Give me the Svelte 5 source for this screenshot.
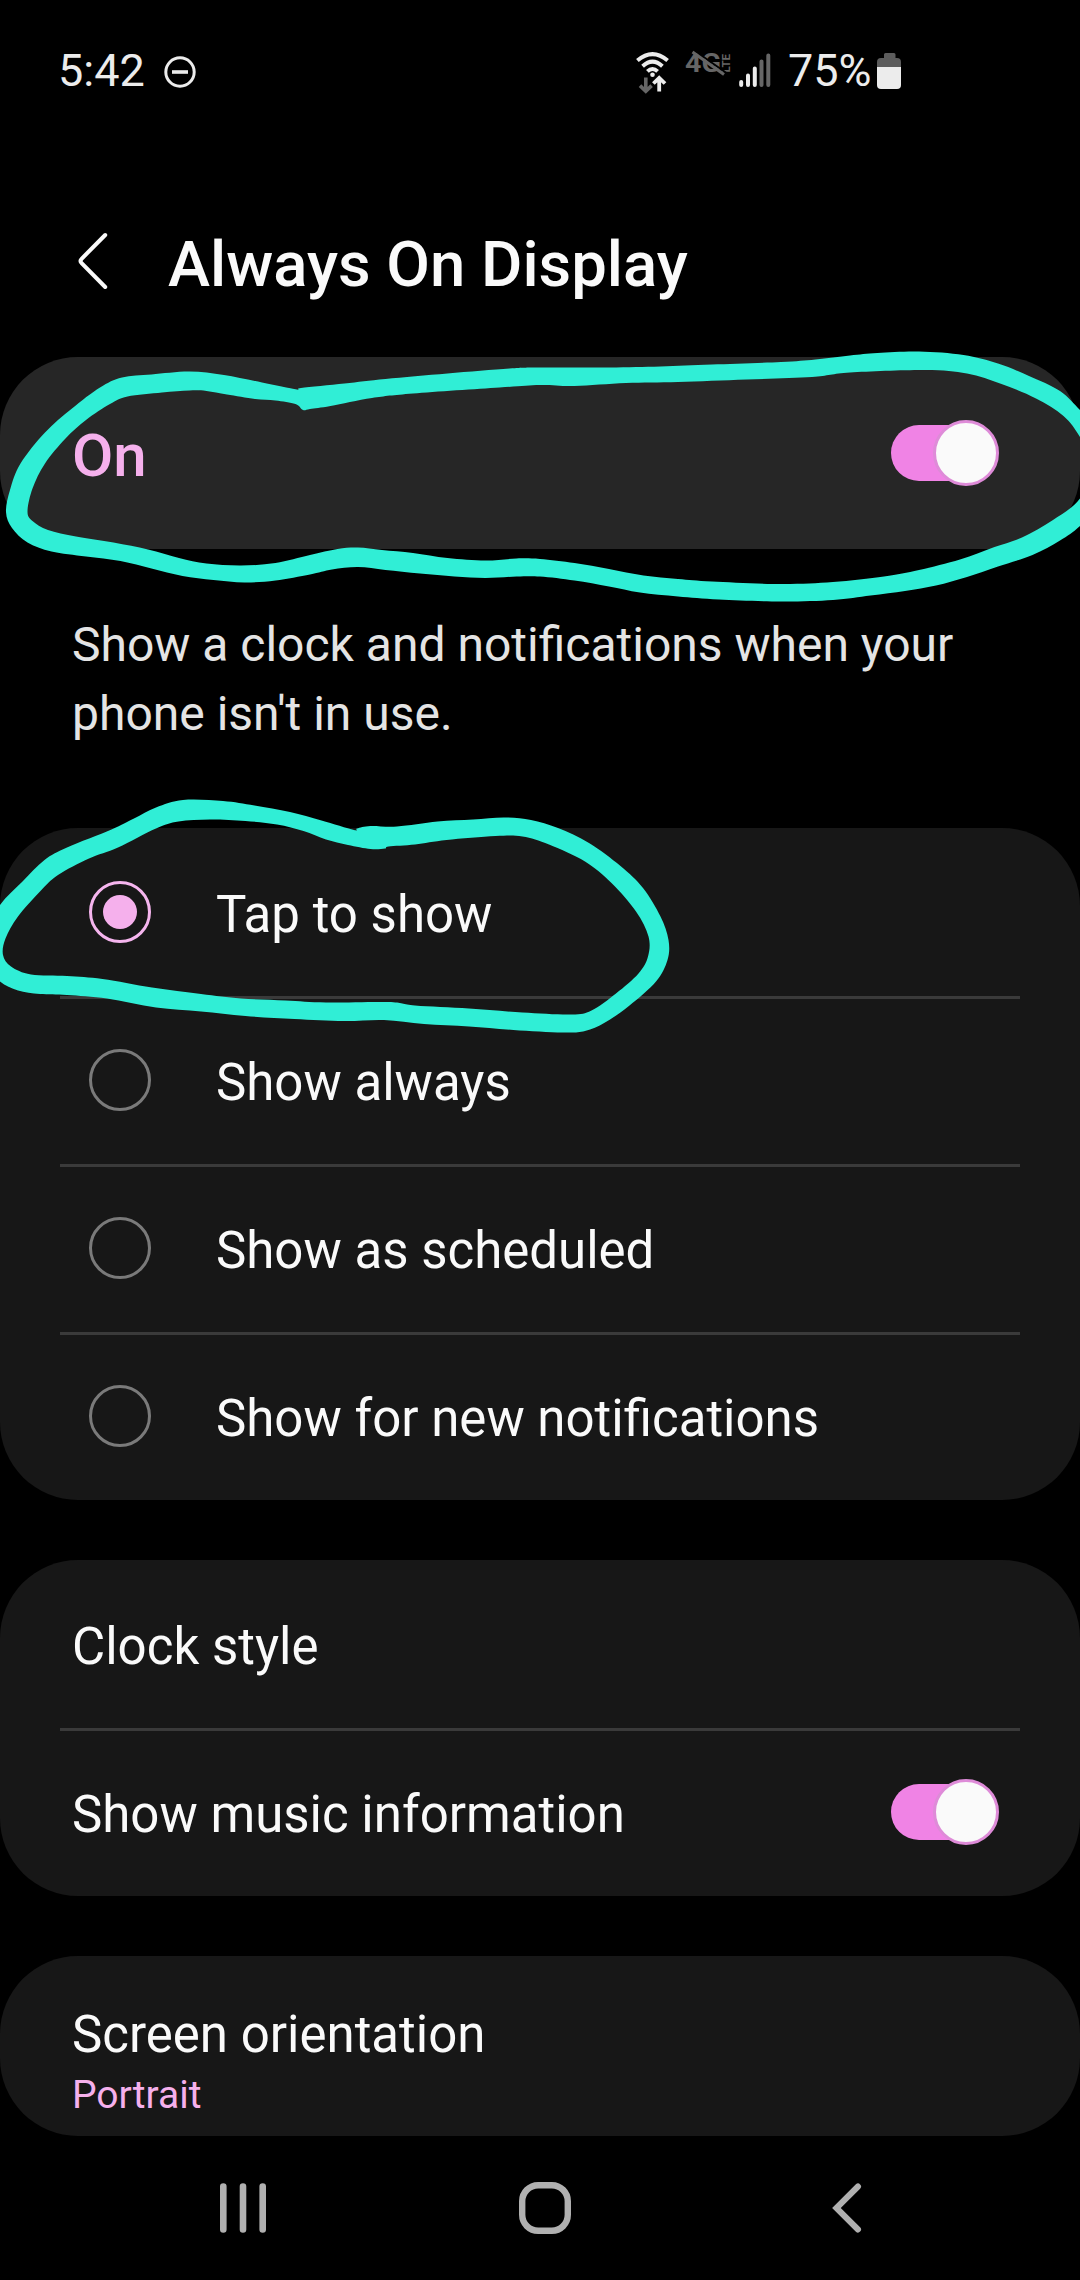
<script>
  const options = ['Tap to show', 'Show always', 'Show as scheduled', 'Show for new notifications'];
  let selected = $state('Tap to show');

  // Hand-drawn marker loops: each has an outer and an inner edge.
  const loops = [
    {
      outer: [297,389.5,262,382.5,224,375,189.5,371.5,151.5,374.5,122,377.5,100,387.5,72,408.5,45,432.5,20.5,463.5,10,490,6,512,12,528,27.5,542.5,51.5,551.5,86,556.5,120.5,561,151.5,568.5,182.5,576,213.5,580,244.5,582.5,275.5,580.5,310,574.5,332,569.5,358,567,385.5,570,420,573.5,454.5,576.5,485.5,578,516.5,576.5,540,576.5,574.5,580.5,609,586.5,640,592.5,678,596.5,719,599.5,781,601.5,833,600,870.5,595.5,905,591,936,585.5,967,577,998,566.5,1032.5,555,1060,540.5,1080,526,1104,500,1110,460,1096,426,1080,410,1060,391,1029,376,998,363.5,963.5,355,919,351.5,877.5,353,850,355.5,815.5,359.5,781,362,712,364.5,660.5,366.5,609,367.5,540,367.5,509.5,368.5,447.5,373.5,385.5,379,344.5,383.5,301,388],
      inner: [303,410,295.5,404,275.5,400.5,255,399,227,394.5,206.5,391,189.5,390.5,162,392.5,127.5,396.5,110,404,86,420,65.5,438.5,45,463.5,32.5,488.5,27.5,511.5,32.5,521,48,530,76,536.5,113.5,542.5,148,549.5,179,558,206.5,563.5,241,565.5,275.5,563,310,555,337.5,549,358,547.5,382,550,413,553,447.5,558,485.5,560.5,516.5,558.5,540,559,574.5,563,609,569,643.5,575.5,678,579,712,581.5,781,584,833,582,884,576.5,919,570,960,559.5,994.5,547,1022,537.5,1053,520,1080,498.5,1094,465,1080,437,1063.5,416,1036,398.5,1001.5,384,967,373.5,925.5,370,850,372.5,812,377,746.5,379.5,678,382,626,383,574.5,386,540,385,499.5,387.5,413,393.5,372,398,330.5,406,310,409]
    },
    {
      outer: [354,830,321.5,820.5,290,812,254.5,805.5,223,801,183,800,156,807.5,134,818.5,111.5,829.5,67,847.5,44.5,860,22.5,881.5,0,905,-16,935,-14,965,0,981.5,18,990.5,40,994,67,995,107,998.5,156,1007.5,201,1011.5,245.5,1016,294.5,1019,344,1021,384,1020,424,1024,469,1026.5,513.5,1030,562.5,1032.5,585,1031,605,1022.5,629.5,1005.5,656,981.5,667.5,960,668.5,940,660.5,916.5,643,888,620.5,866,589,843,558,828,531,820,504.5,817.5,473,819.5,437.5,821.5,397,826.5,370.5,826,357,828.5],
      inner: [385,848.5,370.5,849,348,845,326,839.5,303.5,831,277,824.5,245.5,821,210,819.5,178.5,821.5,156,828.5,118,847.5,89,858.5,58,875,40,891.5,18,916.5,5.5,938.5,3,955,11,966.5,31,974.5,67,976,102.5,979,152,987.5,201,994,241,998.5,285.5,1000.5,326,1002.5,388.5,1002,415,1005.5,469,1008.5,522.5,1012.5,571.5,1014.5,591.5,1010.5,616,993.5,638.5,973.5,648,956.5,648.5,936.5,636,911.5,611.5,883,585,861.5,549,844.5,522.5,836.5,495.5,836,446.5,840,415,844.5,388.5,846.5]
    }
  ];

  // Closed Catmull-Rom spline through a flat list of x, y pairs.
  function smooth(flat) {
    const n = flat.length / 2;
    const p = (i) => {
      const k = ((i % n) + n) % n;
      return [flat[2 * k], flat[2 * k + 1]];
    };
    let d = `M${p(0).join(' ')}`;
    for (let i = 0; i < n; i++) {
      const [a, b, c, e] = [p(i - 1), p(i), p(i + 1), p(i + 2)];
      const c1 = [b[0] + (c[0] - a[0]) / 6, b[1] + (c[1] - a[1]) / 6];
      const c2 = [c[0] - (e[0] - b[0]) / 6, c[1] - (e[1] - b[1]) / 6];
      d += `C${c1.join(' ')} ${c2.join(' ')} ${c.join(' ')}`;
    }
    return d + 'Z';
  }
</script>

{#snippet toggle()}
  <span class="toggle"><span class="track"></span><span class="thumb"></span></span>
{/snippet}

<div class="screen">
  <div class="status">
    <span class="time">5:42</span>
    <svg class="dnd" width="32" height="32" viewBox="0 0 32 32" fill="none" stroke="#ececec" stroke-width="3">
      <circle cx="16" cy="16" r="14.2" /><path d="M8 16H24" stroke-width="3.6" />
    </svg>
    <svg class="wifi" width="34" height="44" viewBox="0 0 34 44" fill="none">
      <g stroke="#ececec" stroke-width="4">
        <path d="M2.4 9.6Q17.5 -3.4 32.6 9.6" />
        <path d="M7.6 15.2Q17.5 6.2 27.4 15.2" />
        <path d="M12.4 20.4Q17.5 15.6 22.6 20.4" />
      </g>
      <circle cx="17.5" cy="23.8" r="2.3" fill="#ececec" />
      <path d="M10.8 26.5V40M5 34.6L10.8 40.3L16.6 34.6" stroke="#666" stroke-width="3.6" />
      <path d="M24.2 40.5V27M18.4 32.5L24.2 26.8L30 32.5" stroke="#ececec" stroke-width="3.8" />
    </svg>
    <svg class="lte" width="50" height="34" viewBox="0 -4 50 34">
      <text class="gen" x="0" y="21" textLength="36" lengthAdjust="spacingAndGlyphs">4G</text>
      <text class="net" transform="translate(45 21.5) rotate(-90)" textLength="18.5" lengthAdjust="spacingAndGlyphs">LTE</text>
      <path d="M10 0L41.5 22" stroke="#000" stroke-width="2" />
      <path d="M7.5 1L39 23.5" stroke="#666" stroke-width="3" />
    </svg>
    <svg class="signal" width="32" height="36" viewBox="0 0 32 36" stroke-width="4" stroke-linecap="round">
      <path d="M2.2 29V32M9 22.5V32M15.8 15.5V32" stroke="#ececec" />
      <path d="M22.5 8.5V32M29.3 2.5V32" stroke="#666" />
    </svg>
    <span class="percent">75%</span>
    <svg class="battery" width="24" height="36" viewBox="0 0 24 36">
      <path d="M7 5V1.5Q7 0 8.5 0H17Q18.5 0 18.5 1.5V5H20Q24 5 24 9V14H0V9Q0 5 4 5Z" fill="#5c5c5c" />
      <path d="M0 14H24V32Q24 36 20 36H4Q0 36 0 32Z" fill="#ececec" />
    </svg>
  </div>

  <header>
    <svg width="30" height="58" viewBox="0 0 30 58" fill="none" stroke="#fafafa" stroke-width="4" stroke-linecap="round" stroke-linejoin="round">
      <path d="M27.2 3L3.6 26.8Q1.5 29 3.6 31.2L27.2 55" />
    </svg>
    <h1>Always On Display</h1>
  </header>

  <section class="card master">
    <span class="on">On</span>
    {@render toggle()}
  </section>

  <p class="about">Show a clock and notifications when your phone isn't in use.</p>

  <section class="card options">
    {#each options as option}
      <button class="row option" onclick={() => (selected = option)}>
        <span class="radio" class:checked={selected === option}></span>
        <span class="label">{option}</span>
      </button>
    {/each}
  </section>

  <section class="card clock">
    <div class="row"><span class="label">Clock style</span></div>
    <div class="row"><span class="label">Show music information</span>{@render toggle()}</div>
  </section>

  <section class="card orientation">
    <span class="label">Screen orientation</span>
    <span class="value">Portrait</span>
  </section>

  <nav>
    <svg width="48" height="54" viewBox="0 0 48 54" stroke="#b0b0b0" stroke-width="6.6" stroke-linecap="round">
      <path d="M4.3 5.5V48.5M24 5.5V48.5M43.7 5.5V48.5" />
    </svg>
    <svg class="home" width="54" height="54" viewBox="0 0 54 54" fill="none" stroke="#b0b0b0" stroke-width="6.4">
      <rect x="4.2" y="4.2" width="45.6" height="45.6" rx="16" />
    </svg>
    <svg width="30" height="54" viewBox="0 0 30 54" fill="none" stroke="#b0b0b0" stroke-width="6" stroke-linecap="round">
      <path d="M26 5.5L4.4 27L26 48.5" />
    </svg>
  </nav>

  <svg class="marker" width="1080" height="2280" viewBox="0 0 1080 2280">
    {#each loops as loop}
      <path d={smooth(loop.outer) + smooth(loop.inner)} fill="#30eed6" fill-rule="evenodd" />
    {/each}
  </svg>
</div>

<style>
  :global(body) {
    background: #000;
  }
  .screen {
    position: relative;
    display: flex;
    flex-direction: column;
    width: 1080px;
    height: 2280px;
    overflow: hidden;
    background: #000;
    color: #fafafa;
    font-family: Roboto, sans-serif;
  }
  svg {
    display: block;
    flex: none;
  }
  .status {
    display: flex;
    align-items: flex-start;
    height: 181px;
    padding: 51px 0 0 58px;
    box-sizing: border-box;
    color: #ececec;
    font-size: 45px;
    line-height: 40px;
  }
  .time {
    width: 106px;
  }
  .dnd {
    margin-top: 5px;
  }
  .wifi {
    margin-left: 439px;
  }
  .lte {
    margin: -4px 0 0 16px;
  }
  .gen,
  .net {
    fill: #666;
    font-family: Roboto, sans-serif;
    font-weight: 700;
  }
  .gen {
    font-size: 26px;
  }
  .net {
    font-size: 11px;
  }
  .signal {
    margin: 2px 0 0 4px;
  }
  .percent {
    width: 89px;
    margin-left: 17px;
  }
  .battery {
    margin-top: 2px;
  }
  header {
    display: flex;
    align-items: center;
    gap: 60px;
    height: 160px;
    margin-bottom: 16px;
    padding-left: 78px;
  }
  h1 {
    margin: 5px 0 0;
    font-size: 63.4px;
    font-weight: 500;
    line-height: 74px;
    white-space: nowrap;
  }
  .card {
    border-radius: 78px;
    background: #171717;
  }
  .master {
    display: flex;
    align-items: center;
    justify-content: space-between;
    height: 192px;
    padding: 0 81px 0 72px;
    box-sizing: border-box;
    background: #262626;
  }
  .on {
    padding-top: 4px;
    color: #f5b0ec;
    font-size: 60px;
    font-weight: 500;
  }
  .toggle {
    position: relative;
    display: block;
    width: 108px;
    height: 66px;
  }
  .track {
    position: absolute;
    inset: 5px 5px 5px 0;
    border-radius: 28px;
    background: #f083e5;
  }
  .thumb {
    position: absolute;
    top: 0;
    right: 0;
    width: 60px;
    height: 60px;
    border: 3px solid #de8bd8;
    border-radius: 50%;
    background: #fafafa;
  }
  .about {
    width: 1008px;
    height: 279px;
    margin: 0;
    padding: 61px 0 0 72px;
    box-sizing: border-box;
    color: #e4e4e4;
    font-size: 48px;
    line-height: 69px;
  }
  .row {
    display: flex;
    align-items: center;
    justify-content: space-between;
    height: 168px;
    padding: 0 81px 0 72px;
    box-sizing: border-box;
    background: none;
  }
  .row + .row {
    background: linear-gradient(#3a3a3a, #3a3a3a) 60px 0 / 960px 3px no-repeat;
  }
  .option {
    justify-content: flex-start;
    gap: 65px;
    width: 100%;
    padding-left: 89px;
    border: 0;
    color: inherit;
    font: inherit;
  }
  .radio {
    display: grid;
    place-items: center;
    width: 62px;
    height: 62px;
    border: 3px solid #7a7a7a;
    border-radius: 50%;
    box-sizing: border-box;
  }
  .radio.checked {
    border-color: #f5b5ee;
  }
  .radio.checked::after {
    content: '';
    width: 34px;
    height: 34px;
    border-radius: 50%;
    background: #f5b0ec;
  }
  .label {
    padding-top: 6px;
    font-size: 51px;
    line-height: 62px;
    white-space: nowrap;
  }
  .clock {
    margin-top: 60px;
  }
  .orientation {
    display: flex;
    flex-direction: column;
    height: 180px;
    margin-top: 60px;
    padding: 42px 0 0 72px;
    box-sizing: border-box;
  }
  .value {
    margin-top: 6px;
    color: #f5b0ec;
    font-size: 39px;
    line-height: 46px;
  }
  nav {
    display: flex;
    padding: 45px 0 0 219px;
  }
  .home {
    margin: 0 260px 0 251px;
  }
  .marker {
    position: absolute;
    inset: 0;
    pointer-events: none;
  }
</style>
